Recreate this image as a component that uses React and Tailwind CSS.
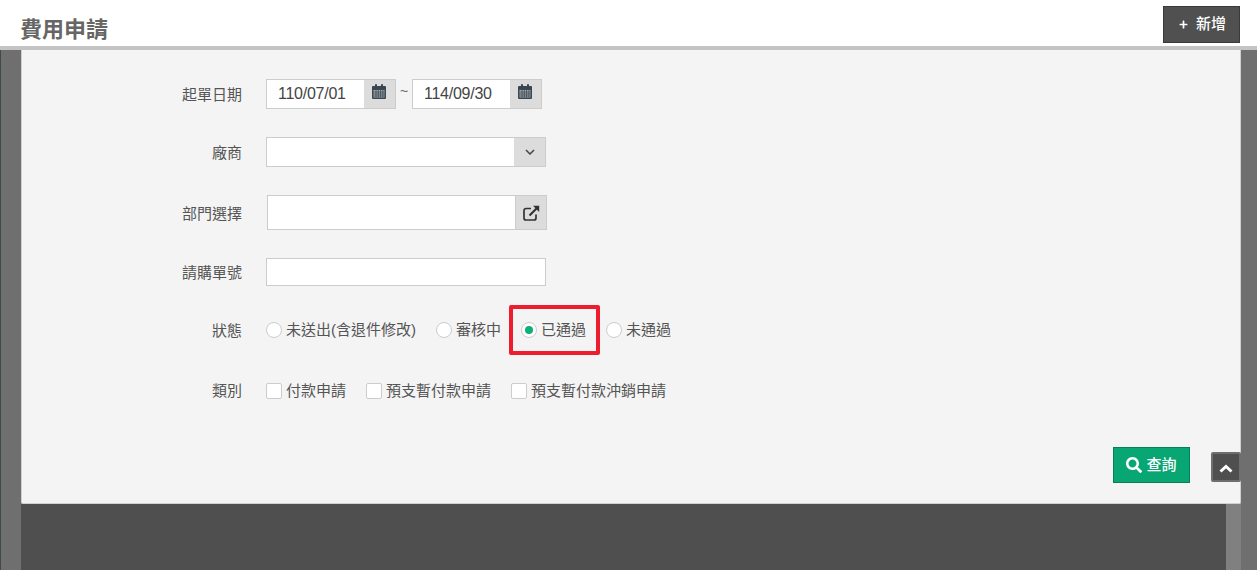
import { FaPlus, FaSearch } from 'react-icons/fa'

const font = "font-['Liberation_Sans','Noto_Sans_CJK_TC',sans-serif]"

function FormRow({ label, height, top, labelPad = 'pt-[3px]', children }) {
  return (
    <div className={`flex items-center ${height} ${top}`}>
      <label className={`w-[220px] text-right text-[15px] text-[#555] ${labelPad}`}>{label}</label>
      <div className="ml-[24px] flex items-center">{children}</div>
    </div>
  )
}

function CalendarIcon() {
  return (
    <svg width="14" height="15" viewBox="0 0 14 15">
      <path d="M1 2h12a1 1 0 0 1 1 1v11a1 1 0 0 1-1 1H1a1 1 0 0 1-1-1V3a1 1 0 0 1 1-1z" fill="#3a4650" />
      <rect x="3" y="0" width="2" height="4" rx="1" fill="#3a4650" />
      <rect x="9" y="0" width="2" height="4" rx="1" fill="#3a4650" />
      <path d="M1.5 6h11v7.5h-11z" fill="#aab0b4" />
      <path d="M1.5 8h11M1.5 10h11M1.5 12h11M4 6v7.5M6.3 6v7.5M8.6 6v7.5M10.9 6v7.5" stroke="#3a4650" strokeWidth="0.8" />
    </svg>
  )
}

function DateInput({ value }) {
  return (
    <div className="flex h-[30px] w-[130px] border border-[#ccc] bg-white">
      <div className="flex-1 pl-[11px] text-[16px] leading-[28px] tracking-[-0.25px] text-[#444]">{value}</div>
      <div className="flex w-[31px] items-center justify-center bg-[#dcdcdc] pb-[5px] pr-[2px]">
        <CalendarIcon />
      </div>
    </div>
  )
}

function Radio({ label, checked, className }) {
  return (
    <label className={`flex items-center ${className}`}>
      <span className="flex h-[16px] w-[16px] items-center justify-center rounded-full border border-[#ccc] bg-white">
        {checked && <span className="h-[8px] w-[8px] rounded-full bg-[#0fb077]" />}
      </span>
      <span className="ml-[4px] text-[15px] text-[#555]">{label}</span>
    </label>
  )
}

function Checkbox({ label, className }) {
  return (
    <label className={`flex items-center ${className}`}>
      <span className="h-[16px] w-[16px] rounded-[2px] border border-[#ccc] bg-white" />
      <span className="ml-[4px] text-[15px] text-[#555]">{label}</span>
    </label>
  )
}

function ExternalLinkIcon() {
  return (
    <svg width="17" height="16" viewBox="0 0 17 16" fill="none" stroke="#333">
      <path d="M13 9.5V13a2 2 0 0 1-2 2H3a2 2 0 0 1-2-2V5.5a2 2 0 0 1 2-2h5" strokeWidth="1.7" />
      <path d="M6.5 10.5 14 3" strokeWidth="2.2" />
      <path d="M10 .8h6.2V7z" fill="#333" stroke="none" />
    </svg>
  )
}

export default function App() {
  return (
    <div className={`relative flex h-[570px] flex-col overflow-hidden bg-white ${font}`}>
      <header className="flex h-[50px] shrink-0 items-start justify-between border-b-[4px] border-[#c4c4c4] bg-white">
        <h1 className="ml-[20px] mt-[15px] text-[22px] font-bold leading-[30px] text-[#666]">費用申請</h1>
        <button className="mr-[17px] mt-[6px] flex h-[37px] w-[77px] items-center justify-center border border-[#3a3a3a] bg-[#505050] pl-[2px] text-[15px] font-medium text-white">
          <FaPlus className="mr-[8px] text-[9px]" />
          新增
        </button>
      </header>

      <div className="flex flex-1 flex-col border-l border-[#3f4a47] bg-[#6f6f6f] pl-[20px] pr-[16px]">
        <main className="flex h-[454px] shrink-0 flex-col rounded-b-[2px] border-x border-b border-[#d0d0d0] bg-[#f4f4f4]">
          <div className="pt-[29px]">
            <FormRow label="起單日期" height="h-[30px]">
              <DateInput value="110/07/01" />
              <span className="w-[16px] pb-[5px] text-center text-[14px] text-[#666]">~</span>
              <DateInput value="114/09/30" />
            </FormRow>
            <FormRow label="廠商" height="h-[30px]" top="mt-[28px]">
              <div className="flex h-[30px] w-[280px] border border-[#ccc] bg-white">
                <div className="flex-1" />
                <div className="flex w-[31px] items-center justify-center bg-[#dcdcdc]">
                  <svg width="10" height="6" viewBox="0 0 10 6" fill="none" stroke="#444" strokeWidth="1.5">
                    <path d="M1 1l4 4 4-4" />
                  </svg>
                </div>
              </div>
            </FormRow>
            <FormRow label="部門選擇" height="h-[35px]" top="mt-[28px]">
              <div className="ml-[1px] flex h-[35px] w-[280px] border border-[#ccc] bg-white">
                <div className="flex-1" />
                <div className="flex w-[31px] items-center justify-center border-l border-[#ccc] bg-[#dcdcdc]">
                  <ExternalLinkIcon />
                </div>
              </div>
            </FormRow>
            <FormRow label="請購單號" height="h-[28px]" top="mt-[28px]">
              <div className="h-[28px] w-[280px] border border-[#ccc] bg-white" />
            </FormRow>
            <FormRow label="狀態" height="h-[30px]" top="mt-[29px]">
              <Radio label="未送出(含退件修改)" className="w-[170px]" />
              <Radio label="審核中" className="w-[85px]" />
              <Radio label="已通過" checked className="w-[85px]" />
              <Radio label="未通過" />
            </FormRow>
            <FormRow label="類別" height="h-[30px]" top="mt-[31px]" labelPad="pt-[1px]">
              <Checkbox label="付款申請" className="w-[100px]" />
              <Checkbox label="預支暫付款申請" className="w-[145px]" />
              <Checkbox label="預支暫付款沖銷申請" />
            </FormRow>
          </div>
          <div className="mt-auto flex justify-end pb-[20px] pr-[50px]">
            <button className="flex h-[36px] w-[77px] items-center justify-center border border-[#07805a] bg-[#08a673] text-[15px] font-medium text-white">
              <FaSearch className="mr-[4px] text-[16px]" />
              查詢
            </button>
          </div>
        </main>
        <div className="flex flex-1">
          <div className="w-[1205px] bg-[#4f4f4f]" />
          <div className="flex-1 bg-[#808080]" />
        </div>
      </div>

      {/* red highlight around the selected status */}
      <div className="absolute left-[509px] top-[305px] h-[50px] w-[91px] rounded-[2px] border-[4px] border-[#ed1c2e]" />

      <button className="absolute left-[1211px] top-[452px] flex h-[30px] w-[30px] items-center justify-center rounded-[2px] border-2 border-[#6e6e6e] bg-[#4f4f4f] pt-[2px]">
        <svg width="14" height="9" viewBox="0 0 14 9" fill="none" stroke="#fff" strokeWidth="3">
          <path d="M1.5 7.5 7 2.5l5.5 5" />
        </svg>
      </button>
    </div>
  )
}
